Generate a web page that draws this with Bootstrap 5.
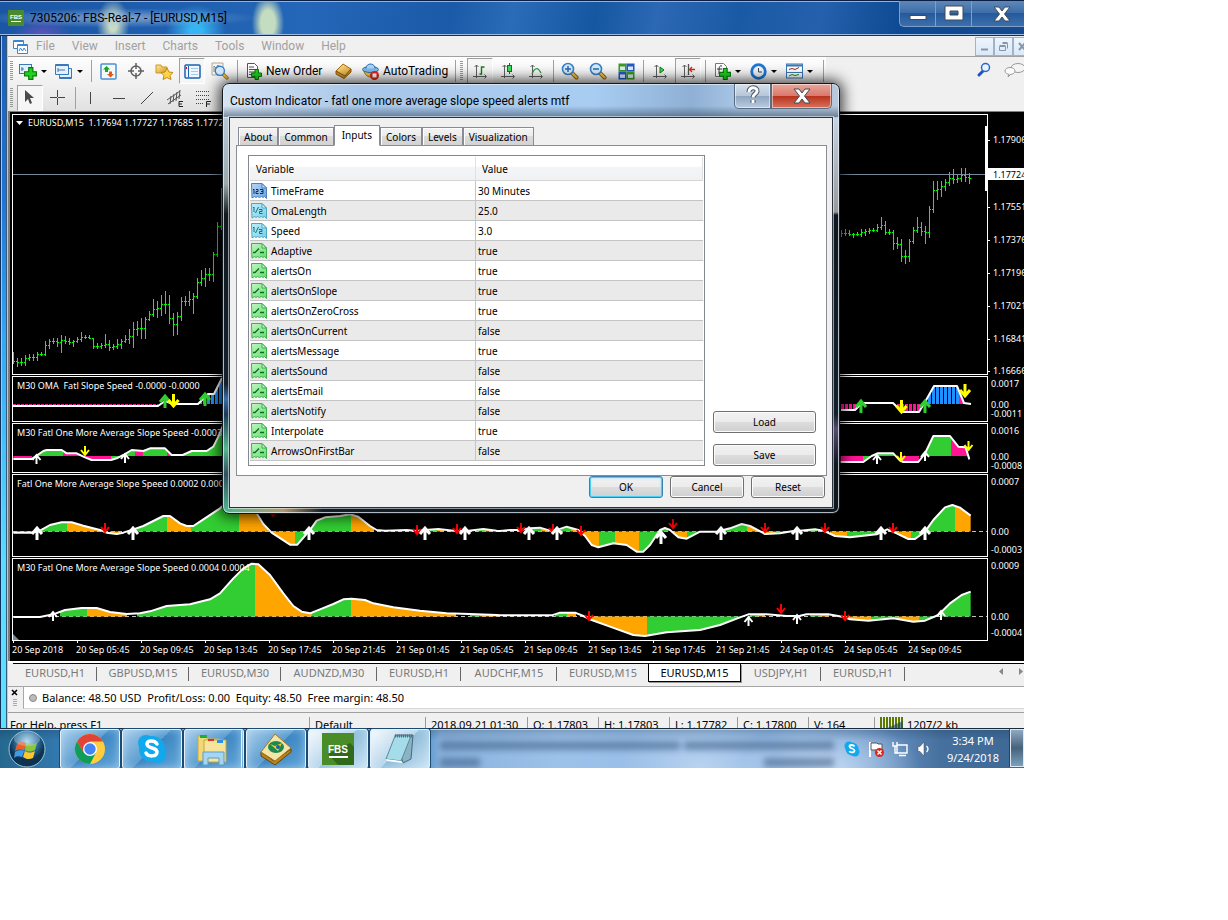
<!DOCTYPE html>
<html lang="en">
<head>
<meta charset="utf-8">
<meta name="viewport" content="width=device-width, initial-scale=1">
<title>7305206: FBS-Real-7 - [EURUSD,M15]</title>
<link href="https://cdn.jsdelivr.net/npm/bootstrap@5.3.0/dist/css/bootstrap.min.css" rel="stylesheet">
<style>
:root{--face:#f0f0f0;--line:#a0a0a0;--ui:"Roboto","Segoe UI",sans-serif;--ui2:"Noto Sans","Segoe UI",sans-serif}
body{background:#fff;font-family:var(--ui);font-size:12px;line-height:16px;color:#000;padding-right:204px}
button{font:inherit;color:inherit;background:none;border:0;padding:0}
a{color:inherit;text-decoration:none}
svg{display:block;flex:none}
.desk{background:linear-gradient(#1a58ae,#1f74d8 200px,#32a8f6 340px,#55dcff 560px,#5ce2ff 700px)}
.titlebar{height:36px;padding-left:8px;gap:6px;border-top:1px solid #0b1f44;box-shadow:inset 0 1px #8fb4e0,inset 0 -1px #9cbce4;border-bottom:1px solid #1a2c50;
 background:radial-gradient(ellipse 200px 14px at 120px 17px,#a9c2e4b0,transparent 70%),radial-gradient(ellipse 30px 18px at 42px 34px,#5a54b8 10%,transparent),radial-gradient(ellipse 18px 30px at 113px 24px,#c9dcc4 20%,transparent 90%),radial-gradient(ellipse 30px 26px at 196px 30px,#35b6f2 20%,transparent),radial-gradient(ellipse 18px 32px at 268px 22px,#c4dcc0 40%,transparent 90%),linear-gradient(100deg,#1a56a4 0,#2466b8 30%,#1b5aa8 44%,#2a6cb8 50%,#1557a0 58%,#2c68b4 64%,#1a5aa4 72%,#2560ac 80%,#0d4a92 88%,#17498c)}
.winbtns{height:26px;align-self:flex-start;border:1px solid #7f9fc8;border-top:0;border-right:0;border-radius:0 0 0 5px;background:linear-gradient(#5f88b8,#3a6ca8 50%,#25599a 50%,#3c70ac)}
.winbtns button{width:36px;height:25px;border-right:1px solid #7f9fc8}
.winbtns button:last-child{width:52px;border:0;padding-left:8px}
.edge{width:8px;border-left:1px solid #10305c;border-right:1px solid #b7cbe0;box-shadow:inset 1px 0 #9cc8f4,inset -1px 0 #3a5878}
.client{background:var(--face);min-width:0}
.menubar{height:21px;border-bottom:1px solid var(--line);color:#a0a0a0;padding-left:5px}
.menubar a{padding:0 9px 0 8px}
.mdi{width:49px}
.mdi button{width:19px;height:19px;border:1px solid #9fb4cb;background:linear-gradient(#eef5fc,#dbe8f6)}
.tools{background:linear-gradient(#fdfdfd,#ededed 60%,#e0e0e0)}
.toolrow{height:27px;border-top:1px solid #fff}
.toolrow2{height:28px;border-bottom:1px solid #808080}
.toolend{border-bottom:1px solid #808080}
.tb{height:26px;width:28px;display:flex;align-items:center;justify-content:center;flex:none}
.tbc{width:36px;justify-content:flex-start;padding-left:2px;gap:4px}
.tbtext{width:auto;justify-content:flex-start;gap:4px;white-space:nowrap}
.neworder{width:89px;padding-left:6px}.autotr{width:95px;padding-left:5px}
.on{border:1px solid #a0a0a0;border-right-color:#fff;border-bottom-color:#fff;background:#f6f6f6;width:26px;margin:0 1px}
.caret{border:3px solid transparent;border-top-color:#000;border-bottom:0}
.sp{width:6px;height:22px;flex:none;background:linear-gradient(var(--line),var(--line)) 3px 0/1px 100% no-repeat}
.grip{width:8px;height:20px;flex:none;background:repeating-linear-gradient(#999 0 1px,transparent 1px 2px) 2px 0/3px 100% no-repeat}
.chartwrap{background:#000;border-left:2px solid #7c7c7c;padding:2px 0 0 2px}
.pane{margin-bottom:1px}
.pane:nth-of-type(5){margin-bottom:0}
.plot{min-width:0;flex:1 1 0}
.ax{width:36px}
svg text{font-family:"Noto Sans",sans-serif;font-size:9px;fill:#fff;white-space:pre}
.ctabs{height:26px;border-top:2px solid #fff;font:11px/16px var(--ui2);color:#7a7a7a;border-bottom:1px solid #a6a6a6;padding-left:5px}
.ctabs>ul{border-top:1px solid #000}
.ctabs li{height:18px;display:flex;align-items:center;justify-content:center;background:linear-gradient(#666,#666) 100% 3px/1px 14px no-repeat}
.t80{width:80px}.t84{width:84px}.t92{width:92px}.t96{width:96px}
.ctabs li.cur{background:#fff;border:1px solid #000;border-top:0;box-shadow:1px 1px #999;color:#000;width:93px;margin-left:-1px}
.term{height:25px;font:11px/20px var(--ui2)}
.termbox{background:#fff;border:1px solid #a8a8a8;border-top:0;border-right:0;border-bottom-color:#d8d8d8;height:22px;white-space:pre;padding-left:5px}
.dot{width:8px;height:8px;border-radius:50%;background:#bbb;border:1px solid #888;margin-right:5px}
.stat{height:16px;border-top:1px solid var(--line);font:11px/16px var(--ui2);overflow:hidden;padding-top:4px;white-space:nowrap}
.stat>span{height:16px;padding-left:5px;border-left:1px solid #999}
.stat>span:first-child{border:0;padding-left:2px}
.s301{width:301px}.s116{width:116px}.s102{width:102px}.s71{width:71px}.s68{width:68px}.s66{width:66px}
.taskbar{height:40px;border-top:1px solid #182a3c;box-shadow:inset 0 1px #b8d4ee;background:linear-gradient(#0f2a4440,transparent 30%),radial-gradient(ellipse 90px 50px at 830px 40px,#c3d9f3,transparent),radial-gradient(ellipse 80px 60px at 700px 40px,#b9d3f0,transparent),linear-gradient(90deg,#25688f 0,#3379b0 60px,#3f86c4 420px,#88b2dc 440px,#9dc2ea 560px,#8fb6e2 800px,#6a94c4 880px,#46719f 940px,#3d6894 1024px)}
.startbtn{width:60px;padding-left:8px}
.tasks{gap:2px}
.tk{width:60px;height:40px;border:1px solid #e3f0fb;border-radius:3px;box-shadow:0 0 0 1px #1c4a70,inset 0 0 8px #d3ecff80;background:linear-gradient(135deg,#a7cdea,#5b9dd0 50%,#3c86c2 50%,#62a6d8);display:flex;align-items:center;justify-content:center;flex:none}
.tk.hot{background:linear-gradient(135deg,#fafdff,#b7d5ea 50%,#8fbcd9 50%,#cbe4f4)}
.stack{border-right:3px double #e3f0fb}
.clock{color:#fff;font:11px/17px var(--ui2);width:74px;text-align:center}
.smudge{left:440px;right:190px;top:12px;height:27px;filter:blur(3px);opacity:.55}
.smudge i{display:block;height:9px;background:#37567e}
.smudge .s1{width:240px}.smudge .s2{width:150px}.smudge .s3{width:40px}.smudge .s4{width:70px}
.showdesk{width:14px;height:38px;border:1px solid #dce9f4;box-shadow:-1px 0 #28435e;background:linear-gradient(#8fa9bf,#46627c 50%,#7aa0bb)}
/* dialog window */
.dlg{left:222px;top:83px;width:618px;border:1px solid #11181f;border-radius:7px;padding:0 7px 6px;box-shadow:0 0 14px 3px #000b,inset 0 0 0 1px #e4eef8c0;
 background:linear-gradient(transparent 22px,#30455a90 33px,transparent 33px),linear-gradient(90deg,#d6e4f4,#a8c6e8 22%,#a9cdf2 60%,#8fb0d4 76%,#a9c6e6 84%,#b8c8dc) 0 0/100% 34px no-repeat,linear-gradient(#b9cadb 30px,#9aa9ac 100px,#121a20 130px,#14202c 300px,#3a6ea8 315px,#1b3a55 330px,#57b690 365px,#2f4f60 390px,#52b890 428px) 0 0/9px 100% no-repeat,linear-gradient(#c6d4e2 34px,#999 128px,#10181f 131px,#122029 330px,#5a4a70 345px,#10181f 380px) 100% 0/9px 100% no-repeat,linear-gradient(90deg,#52b890,#b09a70 60px,#141c24 100px,#0b1218)}
.dlgtitle{height:34px}
.dlgbtns{align-self:flex-start}
.dlgbtns button{height:25px;border:1px solid #5b6b80;border-top:0;box-shadow:inset 0 0 0 1px #ffffff80}
.help{width:37px;border-radius:0 0 0 5px;background:linear-gradient(#d4e0ec,#b5c6d9 50%,#8fa5bf 50%,#b9cde2)}
.cls{width:61px;border-radius:0 0 5px 0;background:linear-gradient(#e8a79c,#d9776a 50%,#b7321d 50%,#d9725a)}
.dclient{background:var(--face);padding:7px 5px 9px 6px;box-shadow:0 0 0 1px #2a333b,0 0 0 2px #f4f8fc90;font:10px/14px var(--ui2)}
.dtabs{padding-left:2px;height:21px;margin-bottom:-1px;position:relative;align-items:flex-end}
.dtabs button{height:19px;padding:0 5px;border:1px solid #898c95;background:linear-gradient(#f4f4f4,#ebebeb 50%,#dcdcdc 50%,#d2d2d2);box-shadow:inset 1px 1px #fff}
.dtabs button.cur{height:21px;background:#fff;border-bottom-color:#fff;padding:0 7px 2px}
.dpanel{background:#fff;border:1px solid #898c95;padding:9px 10px 9px 11px;gap:8px}
.gridbox{border:1px solid #828790;height:311px;padding:1px;flex:1 1 0;min-width:0}
.gridbox table{width:100%;table-layout:fixed;border-collapse:separate;border-spacing:0}
.gridbox th{height:24px;font-weight:400;background:linear-gradient(#fff 40%,#f4f5f7 45%,#eff1f3);border-bottom:1px solid #d5d5d5;border-right:1px solid #e0e1e3;padding:0 6px}
.gridbox td{height:20px;padding:0 2px;border-bottom:1px solid #c4c4c4}
.gridbox td:first-child{border-right:1px solid #c4c4c4;padding-left:1px}
.gridbox th:first-child{width:226px}
.gridbox tr:nth-child(even) td{background:#eaeaea}
.sidebtns{width:103px;gap:11px;flex:none}
.wbtn{height:22px;border:1px solid #707070;border-radius:3px;box-shadow:inset 0 0 0 1px #fcfcfc;background:linear-gradient(#f2f2f2,#ebebeb 50%,#dddddd 50%,#cfcfcf)}
.foot{gap:7px;padding-right:2px}
.foot .wbtn{width:74px}
.wbtn.def{border-color:#3c7fb1;box-shadow:inset 0 0 0 1px #4ad0f8,inset 0 0 3px 1px #a8e4fa}
</style>
</head>
<body>
<svg width="0" height="0" class="position-absolute" aria-hidden="true">
<defs>
<linearGradient id="gold" x2="1" y2="1"><stop stop-color="#ffe9a0"/><stop offset="1" stop-color="#d8961c"/></linearGradient>
<linearGradient id="gn" x2="1" y2="1"><stop stop-color="#c4f7c4"/><stop offset="1" stop-color="#5fdc6c"/></linearGradient>
<linearGradient id="bl" x2="1" y2="1"><stop stop-color="#b8d8f8"/><stop offset="1" stop-color="#6aa0dc"/></linearGradient>
<linearGradient id="cy" x2="1" y2="1"><stop stop-color="#c0f0fa"/><stop offset="1" stop-color="#72cfe6"/></linearGradient>
<radialGradient id="orb" cy=".3"><stop stop-color="#9ad4f0"/><stop offset=".6" stop-color="#2a6c9c"/><stop offset="1" stop-color="#0d3350"/></radialGradient>
<symbol id="plus" viewBox="0 0 11 11"><path d="M4 .5h3.500v3.500H10.500v3.500H7.500V10.500H4V7.500H.5V4H4z" fill="#1fd21f" stroke="#0a7a0a"/></symbol>
<symbol id="axes" viewBox="0 0 16 16"><path d="M4.500 2v13M2.500 4l2-2 2 2M1 13.500h13M12.500 11.500l2 2-2 2" fill="none" stroke="#606060" stroke-width="1"/></symbol>
<symbol id="lens" viewBox="0 0 18 18"><path d="M10.500 10.500l5 5" stroke="#8a6410" stroke-width="4" stroke-linecap="round"/><path d="M10.500 10.500l5 5" stroke="#f0c040" stroke-width="2.400" stroke-linecap="round"/><circle cx="7" cy="7" r="5.500" fill="#d5ebfb" stroke="#3a80c8" stroke-width="1.600"/></symbol>
<symbol id="page" viewBox="0 0 16 16"><path d="M.5.5h10.500l4.500 4.500v10.500l-2-2-1.500 1-1.500-1-2 1-2-1-1.500 1-1.500-1-2.500 1.500z"/><path d="M11 .5v4.500h4.500z" fill="#fff" fill-opacity=".5"/></symbol>
<symbol id="x" viewBox="0 0 20 16"><path d="M2 1h5l3 4 3-4h5l-5.500 7 5.500 7h-5l-3-4-3 4H2l5.500-7z" fill="#fff" stroke="#404a58"/></symbol>
</defs></svg>

<main class="desk position-relative overflow-hidden d-flex flex-column">
<header class="titlebar d-flex align-items-center">
 <svg width="16" height="16"><rect width="16" height="16" fill="#4b8a2c"/><rect x="3" y="11" width="10" height="1" fill="#fff"/><text x="2" y="9" style="font:bold 6px 'Liberation Sans',sans-serif">FBS</text></svg>
 <span class="flex-grow-1">7305206: FBS-Real-7 - [EURUSD,M15]</span>
 <div class="winbtns d-flex overflow-hidden">
  <button aria-label="Minimize" class="d-flex justify-content-center"><svg width="18" height="20"><rect x="1" y="14.500" width="16" height="4" fill="#fff" stroke="#404a58"/></svg></button>
  <button aria-label="Maximize" class="d-flex justify-content-center"><svg width="20" height="22"><path d="M1 5h18v14H1zM6 10v4h8v-4z" fill="#fff" stroke="#404a58" fill-rule="evenodd"/></svg></button>
  <button aria-label="Close" class="d-flex justify-content-center align-items-center"><svg width="20" height="16"><use href="#x"/></svg></button>
 </div>
</header>
<div class="d-flex">
<div class="edge flex-shrink-0"></div>
<div class="client flex-grow-1">
 <nav class="menubar d-flex align-items-center" aria-label="Main menu">
  <svg width="15" height="15" fill="#fff" stroke="#3a86d0"><path d="M.5 1.500h10v8H.5z"/><path d="M.5 2.500h10"/><path d="M4.500 5.500h10v9h-10z"/><path d="M4.500 6.500h10M6 12l1.500-3 2 3 1.500-3 2 3" fill="none"/></svg>
  <a href="#">File</a><a href="#">View</a><a href="#">Insert</a><a href="#">Charts</a><a href="#">Tools</a><a href="#">Window</a><a href="#">Help</a>
  <div class="mdi d-flex ms-auto overflow-hidden">
   <button class="flex-shrink-0" aria-label="Minimize chart"><svg width="17" height="17"><path d="M5 11.500h7" stroke="#8296ae" stroke-width="2"/></svg></button>
   <button class="flex-shrink-0" aria-label="Restore chart"><svg width="17" height="17" fill="none" stroke="#8296ae"><path d="M4.500 8.500h6v4h-6zM4.500 7.500h6M7.500 5.500h5v5M7.500 4.500h5"/></svg></button>
   <button class="flex-shrink-0" aria-label="Close chart"><svg width="17" height="17"><path d="M5 5l6 7M11 5l-6 7" stroke="#8296ae" stroke-width="2"/></svg></button>
  </div>
 </nav>
 <div class="d-flex">
 <div class="tools">
 <div class="toolrow d-flex align-items-center">
  <span class="grip"></span>
  <button class="tb tbc" aria-label="New chart"><svg width="19" height="17"><rect x="1.500" y="1.500" width="12" height="9" fill="#e4f1fc" stroke="#3a78b8"/><path d="M4 4v4M3 6h3" stroke="#3a78b8"/><use href="#plus" x="6" y="4" width="13" height="13"/></svg><i class="caret"></i></button>
  <button class="tb tbc" aria-label="Profiles"><svg width="19" height="17" fill="#e4f1fc" stroke="#3a78b8"><path d="M5.500 5.500h12v10h-12z"/><path d="M1.500 1.500h13v10h-13z"/><path d="M1.500 2.500h13M5 14.500h12M4 5v4M4 7h7"/></svg><i class="caret"></i></button>
  <span class="sp"></span>
  <button class="tb" aria-label="Market watch"><svg width="17" height="17"><rect x="1" y="1" width="15" height="15" rx="1" fill="#f4f8fc" stroke="#4a90d4" stroke-width="1.500"/><path d="M6.500 3l3.500 3.500H8V9H5V6.500H3z" fill="#18a818"/><path d="M10.500 14.500L14 11h-2V8.500H9V11H7z" fill="#e05a20"/></svg></button>
  <button class="tb" aria-label="Data window"><svg width="16" height="16" fill="none" stroke="#606060" stroke-width="1.500"><circle cx="8" cy="8" r="5"/><path d="M8 0v6M8 10v6M0 8h6M10 8h6"/></svg></button>
  <button class="tb" aria-label="Navigator"><svg width="18" height="17"><path d="M1 2h5l1 2h5v6H1z" fill="url(#gold)" stroke="#c89a20"/><path d="M12 5l2 4 4 .5-3 3 1 4-4-2-4 2 1-4-3-3 4-.5z" fill="#ffd34a" stroke="#c08a10"/></svg></button>
  <button class="tb on" aria-label="Terminal"><svg width="17" height="15"><rect x="1" y="1" width="15" height="13" rx="1" fill="#eef6ff" stroke="#1c62b0" stroke-width="1.500"/><path d="M4.500 2v11" stroke="#1c62b0"/><path d="M2.500 3v2" stroke="#d00"/><path d="M7 4.500h7M7 7.500h7M7 10.500h7" stroke="#a8c8e8"/></svg></button>
  <button class="tb" aria-label="Strategy tester"><svg width="18" height="18"><path d="M1 1h11v12H1z" fill="#f4f4f4" stroke="#b0a890"/><path d="M3 10V4l2 2 2-3 2 3" fill="none" stroke="#888"/><use href="#lens" x="3" y="3" width="15" height="15"/></svg></button>
  <span class="sp"></span>
  <button class="tb tbtext neworder"><svg width="16" height="17"><path d="M1.500.5h7l3 3v11h-10z" fill="#fff" stroke="#555"/><path d="M3 4h5M3 6.500h7M3 9h7M3 11.500h4" stroke="#555"/><use href="#plus" x="5" y="6" width="11" height="11"/></svg>New Order</button>
  <button class="tb" aria-label="MetaEditor"><svg width="17" height="16"><path d="M1 8l7-7 8 5-6 8z" fill="url(#gold)" stroke="#a86c10"/><path d="M1 8v3l8 4.500 7-6.500V6l-6 7z" fill="#d0932a" stroke="#8a5a0c"/></svg></button>
  <button class="tb tbtext autotr"><svg width="17" height="17"><path d="M2 8c1 7 11 9 13 0z" fill="#f2c23c" stroke="#a8761a"/><ellipse cx="8.500" cy="6.500" rx="8" ry="3" fill="#7cbcf0" stroke="#2c6cac"/><path d="M4 5.500c0-6 9-6 9 0" fill="#a8d4f8" stroke="#2c6cac"/><circle cx="12.500" cy="12.500" r="4.500" fill="#e02818"/><rect x="10.500" y="10.500" width="4" height="4" fill="#fff"/></svg>AutoTrading</button>
  <span class="sp"></span><span class="grip"></span>
  <button class="tb on" aria-label="Bar chart"><svg width="16" height="16"><use href="#axes"/><path d="M7.500 11h2V4h3" fill="none" stroke="#108010" stroke-width="1.400"/></svg></button>
  <button class="tb" aria-label="Candlesticks"><svg width="16" height="16"><use href="#axes"/><path d="M9.500 0v11" stroke="#0a7a0a"/><rect x="7.500" y="2.500" width="4" height="6" fill="#3fdc5a" stroke="#0a7a0a"/></svg></button>
  <button class="tb" aria-label="Line chart"><svg width="16" height="16"><use href="#axes"/><path d="M4 11c3-7 6-7 9-1" fill="none" stroke="#2a9a3a" stroke-width="1.300"/></svg></button>
  <span class="sp"></span>
  <button class="tb" aria-label="Zoom in"><svg width="18" height="18"><use href="#lens"/><path d="M4 7h6M7 4v6" stroke="#2a68b0" stroke-width="1.500"/></svg></button>
  <button class="tb" aria-label="Zoom out"><svg width="18" height="18"><use href="#lens"/><path d="M4 7h6" stroke="#2a68b0" stroke-width="1.500"/></svg></button>
  <button class="tb" aria-label="Tile windows"><svg width="17" height="17"><path d="M.5.5h8v8h-8z" fill="#3c9a20"/><path d="M8.500.5h8v8h-8z" fill="#2258c8"/><path d="M.5 8.500h8v8h-8z" fill="#2258c8"/><path d="M8.500 8.500h8v8h-8z" fill="#3c9a20"/><path d="M2 3.500h5v3.500H2zM10 3.500h5v3.500h-5zM2 11.500h5v3.500H2zM10 11.500h5v3.500h-5z" fill="#dcecf8"/></svg></button>
  <span class="sp"></span>
  <button class="tb" aria-label="Auto scroll"><svg width="16" height="16"><use href="#axes"/><path d="M8 4l4 3-4 3z" fill="#3fdc5a" stroke="#0a7a0a"/></svg></button>
  <button class="tb on" aria-label="Chart shift"><svg width="16" height="16"><use href="#axes"/><path d="M8.500 1v11" stroke="#505050" stroke-width="1.300"/><path d="M15 6.500h-5M12 4l-2.500 2.500L12 9" fill="none" stroke="#d03010" stroke-width="1.300"/></svg></button>
  <span class="sp"></span>
  <button class="tb tbc ms-1" aria-label="Indicators"><svg width="17" height="18"><path d="M1.500 1.500h8l3 3v10h-11z" fill="#fff" stroke="#777"/><path d="M8 4c-3-1-3 2-3 8M3 7h5" fill="none" stroke="#333"/><use href="#plus" x="5" y="6" width="12" height="12"/></svg><i class="caret"></i></button>
  <button class="tb tbc" aria-label="Periods"><svg width="17" height="17"><circle cx="8.500" cy="8.500" r="6.800" fill="#eef4fa" stroke="#1c78d8" stroke-width="2.800"/><path d="M8.500 5v4h3.500" fill="none" stroke="#444"/></svg><i class="caret"></i></button>
  <button class="tb tbc" aria-label="Templates"><svg width="17" height="16"><rect x=".5" y="1" width="16" height="14" fill="#fff" stroke="#3a78b8"/><path d="M0 2.500h17" stroke="#3a78b8" stroke-width="2"/><path d="M1 9.500h15" stroke="#3a78b8"/><path d="M3 6.500l3-1 3 1 4-2" fill="none" stroke="#a02810"/><path d="M3 13l3-1.500 3 1 4-1" fill="none" stroke="#189018"/></svg><i class="caret"></i></button>
  <span class="sp"></span>
 </div>
 <div class="toolrow2 d-flex align-items-center">
  <span class="grip"></span>
  <button class="tb on" aria-label="Cursor"><svg width="12" height="17"><path d="M1 1v12l3-3 2 5 2-1-2-5h4z" fill="#4a4a4a"/></svg></button>
  <button class="tb" aria-label="Crosshair"><svg width="16" height="16"><path d="M7.500 0v7M7.500 8v7M0 7.500h7M8 7.500h7" stroke="#444"/></svg></button>
  <span class="sp"></span>
  <button class="tb" aria-label="Vertical line"><svg width="16" height="16"><path d="M6.500 2v12" stroke="#444"/></svg></button>
  <button class="tb" aria-label="Horizontal line"><svg width="16" height="16"><path d="M1 8.500h12" stroke="#444"/></svg></button>
  <button class="tb" aria-label="Trend line"><svg width="16" height="16"><path d="M1 14L13 2" stroke="#444"/></svg></button>
  <button class="tb" aria-label="Equidistant channel"><svg width="18" height="18"><path d="M0 11L13 2M1 15L14 6M4 7l-1 8M7 5L6 13M10 3L9 12M13 1l-1 9" stroke="#555"/><path d="M16 12.500h-4v5h4M12 15h3" fill="none" stroke="#222"/></svg></button>
  <button class="tb" aria-label="Fibonacci"><svg width="18" height="18"><path d="M1 2.500h14M1 6.500h14M1 10.500h14M1 14.500h8" stroke="#444" stroke-dasharray="1 1"/><path d="M16 12.500h-4.500V18M12 15h3" fill="none" stroke="#222"/></svg></button>
 </div>
 </div>
 <div class="toolend flex-grow-1 d-flex justify-content-end gap-2 pt-1 overflow-hidden">
  <svg width="16" height="18"><path d="M7 10l-4 4" stroke="#1f50c0" stroke-width="3" stroke-linecap="round"/><circle cx="9.500" cy="6.500" r="4" fill="#e8f4ff" stroke="#2a64d4" stroke-width="1.500"/></svg>
  <svg width="20" height="18" class="ms-1"><ellipse cx="14" cy="7" rx="7" ry="4.500" fill="#f4f4f4" stroke="#999"/><ellipse cx="6" cy="10" rx="5" ry="3.500" fill="#fafafa" stroke="#999"/><path d="M5 13l-1 3 3-3" fill="#fafafa" stroke="#999"/></svg>
 </div>
 </div>
 <div class="chartwrap overflow-hidden" id="charts"></div>
 <nav class="ctabs d-flex" aria-label="Chart windows">
  <ul class="list-unstyled d-flex flex-grow-1 mb-0">
   <li class="t84"><a href="#">EURUSD,H1</a></li><li class="t92"><a href="#">GBPUSD,M15</a></li><li class="t92"><a href="#">EURUSD,M30</a></li><li class="t96"><a href="#">AUDNZD,M30</a></li><li class="t84"><a href="#">EURUSD,H1</a></li><li class="t96"><a href="#">AUDCHF,M15</a></li><li class="t92"><a href="#">EURUSD,M15</a></li><li class="cur"><a href="#">EURUSD,M15</a></li><li class="t80"><a href="#">USDJPY,H1</a></li><li class="t84"><a href="#">EURUSD,H1</a></li>
  </ul>
  <svg width="26" height="20"><path d="M0 .5h26" stroke="#000"/><path d="M5 5v7L1 8.500zM21 5v7l4-3.500z" fill="#888"/></svg>
 </nav>
 <div class="term d-flex">
  <svg width="15" height="24"><path d="M4 3l5 5M9 3l-5 5" stroke="#000" stroke-width="1.600"/><path d="M5 12.500h4M5 14.500h4M5 16.500h4M5 18.500h4" stroke="#aaa"/></svg>
  <div class="termbox flex-grow-1 d-flex align-items-center"><span class="dot"></span>Balance: 48.50 USD  Profit/Loss: 0.00  Equity: 48.50  Free margin: 48.50</div>
 </div>
 <footer class="stat d-flex"><span class="s301">For Help, press F1</span><span class="s116">Default</span><span class="s102">2018.09.21 01:30</span><span class="s71">O: 1.17803</span><span class="s71">H: 1.17803</span><span class="s68">L: 1.17782</span><span class="s71">C: 1.17800</span><span class="s66">V: 164</span><span class="d-flex gap-1"><svg width="23" height="12"><path d="M0 6h23" stroke="#5a7a00" stroke-width="12" stroke-dasharray="2 1"/><path d="M5 12h18V4z" fill="#1c4a5a" fill-opacity=".6"/></svg>1207/2 kb</span></footer>
</div>
</div>

<footer class="taskbar d-flex position-relative">
 <div class="smudge position-absolute overflow-hidden" aria-hidden="true"><div class="d-flex justify-content-between"><i class="s1"></i><i class="s2"></i></div><div class="d-flex justify-content-between mt-2"><i class="s3"></i><i class="s4"></i></div></div>
 <button aria-label="Start" class="startbtn"><svg width="38" height="38"><circle cx="19" cy="19" r="18" fill="url(#orb)" stroke="#9cc4dc"/><path d="M9 14c3-3 6-2 9-1l-2 7c-3-1-6-1-9 1z" fill="#e8602c"/><path d="M19 13c3 2 6 2 10 0l-2 7c-4 2-7 2-10 0z" fill="#8cc63c"/><path d="M7 22c3-2 6-2 9-1l-2 6c-3-1-6-1-8 1z" fill="#3c9ce8"/><path d="M17 21c3 2 6 2 10 0l-2 7c-4 2-7 1-10-1z" fill="#fcc82c"/><ellipse cx="19" cy="9" rx="13" ry="7" fill="#fff" fill-opacity=".25"/></svg></button>
 <div class="tasks d-flex">
 <button class="tk" aria-label="Chrome"><svg width="32" height="32" viewBox="-16 -16 32 32"><circle r="15" fill="#ffcd40"/><path d="M-13-7.500A15 15 0 0 0 0 15L6 3.500-6 3.500z" fill="#109d58"/><path d="M-6 4L-13-7.500A15 15 0 0 1 13-7.500H0z" fill="#e04434"/><circle r="7" fill="#fff"/><circle r="5.700" fill="#4385f4"/></svg></button>
 <button class="tk" aria-label="Skype"><svg width="32" height="32"><circle cx="16" cy="16" r="13" fill="#12a8ec"/><circle cx="10" cy="10" r="8" fill="#12a8ec"/><circle cx="22" cy="22" r="8" fill="#12a8ec"/><path d="M21 11c-2-4-10-4-10 0 0 5 10 3 10 8 0 5-9 5-11 1" fill="none" stroke="#fff" stroke-width="3.500" stroke-linecap="round"/></svg></button>
 <button class="tk stack" aria-label="Explorer"><svg width="36" height="34"><path d="M3 4h8l2 3h12v22H3z" fill="#f0d878" stroke="#c8a83c"/><path d="M5 3h7v3H5z" fill="#18b03c"/><path d="M9 8h22v22H9z" fill="#f6e49a" stroke="#c8a83c"/><path d="M13 7h6v2h-6z" fill="#e83020"/><path d="M22 8h6v3h-6z" fill="#2890e8"/><path d="M8 33V20h21v13h-5v-7H13v7z" fill="#a4d6f4" stroke="#5c9cc8"/></svg></button>
 <button class="tk" aria-label="MetaEditor"><svg width="36" height="34"><path d="M3 20l13 9 17-12v3L17 33 3 24z" fill="#b8831c" stroke="#6a4408"/><path d="M3 20L17 2l16 14-16 13z" fill="#f4e4a8" stroke="#a87818"/><ellipse cx="18" cy="15" rx="8" ry="6" fill="#1c8a4c"/><path d="M12 12l5 2 7-3-4 8z" fill="#f8c830"/><circle cx="20" cy="15" r="2" fill="#1860b0"/></svg></button>
 <button class="tk hot" aria-label="FBS"><svg width="32" height="32"><rect width="32" height="32" fill="#4a8c28"/><path d="M6 21L28 10l4 4v18H16z" fill="#2f6a18"/><text x="6" y="20" style="font:bold 10px 'Liberation Sans',sans-serif">FBS</text><path d="M7 24h19" stroke="#fff" stroke-width="2"/></svg></button>
 <button class="tk hot" aria-label="Notepad"><svg width="34" height="32"><path d="M12 2h18l-2 24-8 4z" fill="#8ab4c4" stroke="#4a6a78"/><path d="M12 3h16L18 28 3 26z" fill="#a4dcea" stroke="#5a8a9a"/><path d="M12 3h17" stroke="#667" stroke-width="3" stroke-dasharray="1 1"/><path d="M3 26l15 2 2 2L4 28z" fill="#fff"/></svg></button>
 </div>
 <div class="d-flex align-items-center ms-auto gap-2">
  <svg width="16" height="16"><circle cx="8" cy="8" r="6.500" fill="#12a8ec"/><circle cx="5" cy="5" r="4.500" fill="#12a8ec"/><circle cx="11" cy="11" r="4.500" fill="#12a8ec"/><path d="M10.500 5.500c-1-2-5-2-5 0 0 2.500 5 1.500 5 4s-4.500 2.500-5 .5" fill="none" stroke="#fff" stroke-width="1.800"/></svg>
  <svg width="16" height="16"><path d="M2 1v15" stroke="#fff" stroke-width="2"/><path d="M3 2h6l1 1h4v7H9L8 9H3z" fill="#fff" stroke="#555"/><circle cx="11.500" cy="11.500" r="4.500" fill="#d8281c"/><path d="M9.500 9.500l4 4m0-4l-4 4" stroke="#fff" stroke-width="1.500"/></svg>
  <svg width="16" height="16" fill="none" stroke="#fff" stroke-width="1.400"><path d="M5 4h10v8H5zM7 14.500h7M1 1v4h4V1M3 5v7h2"/></svg>
  <svg width="16" height="16"><path d="M2 5.500h2l4-4.500v14l-4-4.500H2z" fill="#fff" stroke="#444" stroke-width=".5"/><path d="M10.500 5c2 2 2 4 0 6" fill="none" stroke="#fff" stroke-width="1.300"/></svg>
 </div>
 <div class="clock ms-1 align-self-center">3:34 PM<br>9/24/2018</div>
 <button class="showdesk" aria-label="Show desktop"></button>
</footer>

<section class="dlg position-absolute" role="dialog" aria-labelledby="dt">
 <div class="dlgtitle d-flex align-items-center"><span id="dt" class="flex-grow-1">Custom Indicator - fatl one more average slope speed alerts mtf</span>
  <div class="dlgbtns d-flex"><button class="help d-flex justify-content-center" aria-label="Help"><svg width="16" height="22"><path d="M4 8c0-6 9-5 8-.5-1 3-4 2.500-4 6M8 16v3" fill="none" stroke="#4a5564" stroke-width="5"/><path d="M4 8c0-6 9-5 8-.5-1 3-4 2.500-4 6M8 16v3" fill="none" stroke="#fff" stroke-width="3"/></svg></button><button class="cls d-flex justify-content-center align-items-center" aria-label="Close dialog"><svg width="20" height="16"><use href="#x"/></svg></button></div>
 </div>
 <div class="dclient">
  <div class="dtabs d-flex" role="tablist"><button role="tab">About</button><button role="tab">Common</button><button role="tab" class="cur" aria-selected="true">Inputs</button><button role="tab">Colors</button><button role="tab">Levels</button><button role="tab">Visualization</button></div>
  <div class="dpanel d-flex">
   <div class="gridbox"><table><thead><tr><th scope="col">Variable</th><th scope="col">Value</th></tr></thead><tbody id="vars"></tbody></table></div>
   <div class="sidebtns d-flex flex-column justify-content-end"><button class="wbtn">Load</button><button class="wbtn">Save</button></div>
  </div>
  <div class="foot d-flex justify-content-end"><button class="wbtn def">OK</button><button class="wbtn">Cancel</button><button class="wbtn">Reset</button></div>
 </div>
</section>
</main>

<script src="https://cdn.jsdelivr.net/npm/bootstrap@5.3.0/dist/js/bootstrap.bundle.min.js"></script>
<script>
const vars=[['TimeFrame','30 Minutes','n'],['OmaLength','25.0','d'],['Speed','3.0','d'],['Adaptive','true'],['alertsOn','true'],['alertsOnSlope','true'],['alertsOnZeroCross','true'],['alertsOnCurrent','false'],['alertsMessage','true'],['alertsSound','false'],['alertsEmail','false'],['alertsNotify','false'],['Interpolate','true'],['ArrowsOnFirstBar','false']];
const pg=(f,s,inner)=>`<svg width="16" height="16"><use href="#page" fill="url(#${f})" stroke="${s}"/>${inner}</svg>`;
const ic={
 n:pg('bl','#4a80c0','<path d="M2 7l1-1v5M5 6.500h2v2H5v2h2.500M9 6.500h3v4H9M10 8.500h2" fill="none" stroke="#0c3068"/>'),
 d:pg('cy','#4aa8c4','<path d="M2 5l1-1v5M4.500 10L7.500 4M8 6.500h3v2H8.500v2h3" fill="none" stroke="#1a6c84"/>'),
 b:pg('gn','#3fb04c','<path d="M2 9.500h2l4-4M9 9.500h4" fill="none" stroke="#0c6c20" stroke-width="1.300"/>')};
document.getElementById('vars').innerHTML=vars.map(v=>`<tr><td><div class="d-flex align-items-center gap-1">${ic[v[2]||'b']}<span>${v[0]}</span></div></td><td>${v[1]}</td></tr>`).join('');

/* price bars: [high, low] every 4 units */
const left=[[352,363],[358,366],[358,365],[355,365],[354,360],[354,360],[352,360],[352,355],[341,355],[339,348],[338,343],[338,346],[335,352],[336,343],[338,344],[340,346],[337,342],[332,341],[335,338],[335,338],[338,348],[343,348],[343,348],[334,347],[340,350],[344,349],[339,348],[339,348],[335,342],[329,343],[322,347],[321,335],[318,338],[317,338],[311,320],[299,316],[301,317],[295,315],[291,313],[295,323],[313,335],[312,334],[297,320],[296,305],[291,305],[293,313],[278,298],[270,285],[268,286],[268,280],[252,281],[222,256],[188,229]];
const right=[[230,236],[229,235],[230,235],[233,237],[232,235],[229,236],[229,235],[228,233],[228,231],[224,231],[217,229],[221,234],[229,234],[230,249],[237,248],[239,261],[250,263],[239,261],[227,243],[217,232],[222,235],[226,243],[206,237],[181,212],[181,199],[181,196],[179,190],[172,185],[169,183],[175,182],[168,181],[168,181],[173,183]];
function bars(a,x0){let d='';a.forEach(([h,l],i)=>{const x=x0+i*4+.5,n=a[i+1]||[h,l],c=Math.round((Math.max(h,n[0])+Math.min(l,n[1]))/2)+.5;d+=`M${x} ${h}V${l+1}`;if(i<a.length-1)d+=`M${x} ${c}h1.500M${x+2.5} ${c}h1.500`;else d+=`M${x} ${c}h2`});return `<path d="${d}" stroke="#0f0" fill="none"/>`}
const C={g:'#32cd32',o:'#ffa500',p:'#ff1493',b:'#1e90ff'};
let uid=0;
function hist(zero,pts,segs){const p=pts.map(q=>q.join(',')).join(' '),id='c'+(uid++);
 let s=`<clipPath id="${id}"><polygon points="${pts[0][0]},${zero} ${p} ${pts[pts.length-1][0]},${zero}"/></clipPath><g clip-path="url(#${id})">`;
 for(const [a,b,c,st] of segs){if(st)for(let x=a;x<b;x+=4)s+=`<rect x="${x}" y="376" width="3" height="260" fill="${C[c]}"/>`;else s+=`<rect x="${a}" y="376" width="${b-a}" height="270" fill="${C[c]}"/>`}
 return s+`</g><polyline points="${p}" fill="none" stroke="#fff" stroke-width="2" stroke-linejoin="round"/>`}
const Z=(arr,x,y)=>arr.map(([a,b])=>[x+a/3,y+b/3]);
function arrows(list){return list.map(([x,y,k,c])=>{const big=k=='U'||k=='D',up=k.toUpperCase()=='U',f=up?'':' scale(1 -1)';
 return `<path transform="translate(${x} ${y})${f}" d="${big?'M0 -5V7M-5 1L0 -5L5 1':'M0 -4V5M-4 1L0 -4L4 1'}" fill="none" stroke="${c}" stroke-width="${big?3:2}"/>`}).join('')}
const W='#fff',G='#32cd32',Y='#ff0',R='#f00';
const dash=z=>`<path d="M13 ${z}H987" stroke="#c0c0c0" stroke-dasharray="4 3"/>`;
const z9=a=>Z(a,0,480),z10=a=>Z(a,500,400),z8=a=>Z(a,800,370),z5=a=>Z(a,0,370);
const panes=[
{y:114,h:261,title:'',svg:`<path d="M13 174.500H987" stroke="#778899"/><path d="M16 121h7l-3.500 4z" fill="#fff"/><text x="28" y="126">EURUSD,M15  1.17694 1.17727 1.17685 1.17724</text>`+bars(left,13)+bars(right,841)+`<path d="M986.500 126v65" stroke="#fff" stroke-width="3"/>`,
 ax:[[140,'1.17906'],[207,'1.17551'],[240,'1.17376'],[273,'1.17196'],[306,'1.17021'],[339,'1.16841'],[371,'1.16666']]},
{y:376,h:46,title:'M30 OMA  Fatl Slope Speed -0.0000 -0.0000',svg:`<path d="M13 404.500H158" stroke="#ff1493" stroke-dasharray="3 1"/>`+hist(404,[[13,406],[158,406],[165,401],[173,404],[198,404],[208,394],[214,394],[222,378]],[[199,224,'b',1]])
 +hist(404,[[841,410],[855,410],[862,403],[893,403],[902,412],[919,412],[925,402],[934,386],[957,386],[964,403],[971,404]],[[837,856,'p',1],[893,920,'p',1],[928,958,'b',1],[959,965,'p']])
 +arrows([[165,401,'U',G],[173.500,401,'D',Y],[205,399,'U',G],[861,406,'U',G],[901.500,407,'D',Y],[925,406,'U',G],[965,391,'D',Y]]),ax:[[384,'0.0017'],[405,'0.00'],[414,'-0.0011']]},
{y:423,h:50,title:'M30 Fatl One More Average Slope Speed -0.0003 -0.0004',svg:hist(456,z5([[40,267],[95,267],[108,258],[130,243],[140,240],[185,240],[200,250],[230,250],[255,262],[275,270],[333,270],[350,265],[370,255],[395,240],[430,243],[450,235],[495,235],[515,255],[548,255],[575,243],[620,243],[640,230],[655,200],[669,166]]),[[13,32,'p'],[36,63,'g'],[63,80,'p'],[85,111,'p'],[111,121,'g'],[126,135,'g'],[135,143,'p'],[143,167,'g'],[167,172,'p'],[183,224,'g']])
 +hist(456,z8([[122,276],[190,276],[215,258],[232,250],[280,250],[300,272],[310,276],[355,276],[375,250],[400,198],[450,198],[475,230],[497,232],[508,268]]),[[840,863,'p'],[863,895,'g'],[902,919,'p'],[925,951,'g'],[951,971,'p']])
 +arrows([[36.500,459,'u',W],[85,451,'d',Y],[125,458,'u',W],[877,459,'u',W],[901,457,'d',Y],[925,456,'u',W],[968.500,446,'d',Y]]),ax:[[431,'0.0016'],[457,'0.00'],[466,'-0.0008']]},
{y:474,h:83,title:'Fatl One More Average Slope Speed 0.0002 0.0003',svg:dash(531.5)+hist(531.5,[...z9([[40,158],[95,158],[120,152],[150,135],[185,127],[215,127],[250,137],[300,150],[320,158],[350,162],[370,158],[400,148],[430,138],[490,108],[510,108],[540,130],[560,138],[580,138],[600,125],[660,85],[700,50],[740,60],[770,100],[790,132],[815,158],[870,194],[892,194],[930,150],[950,122],[975,112],[1020,108],[1050,103],[1075,110],[1110,138],[1130,150],[1155,152],[1220,150],[1250,153],[1275,150],[1315,147],[1360,152],[1400,153],[1450,147],[1490,152]]),...z10([[0,393],[30,390],[60,390],[90,385],[120,383],[150,392],[165,392],[200,380],[235,390],[255,408],[275,435],[295,442],[340,430],[380,435],[410,455],[430,455],[450,435],[480,390],[495,384],[510,390],[535,412],[560,416],[600,395],[650,395],[690,385],[725,372],[750,378],[795,402],[840,400],[880,393]]),...z8([[0,482],[45,478],[70,482],[105,498],[150,502],[230,493],[262,478],[290,490],[325,507],[345,507],[375,485],[400,450],[435,412],[457,405],[480,413],[512,437]])],
 [[13,36,'o'],[42,67,'g'],[67,100,'o'],[110,120,'o'],[135,167,'g'],[167,191,'o'],[191,239,'g'],[239,268,'o'],[273,295,'o'],[295,305,'g'],[311,351,'g'],[351,374,'o'],[430,438,'g'],[438,444,'o'],[478,485,'g'],[485,490,'o'],[532,541,'g'],[541,547,'o'],[561,571,'g'],[571,576,'o'],[581,599,'o'],[599,615,'g'],[615,639,'o'],[639,657,'g'],[661,668,'g'],[671,687,'o'],[687,699,'g'],[722,747,'g'],[747,776,'o'],[776,785,'g'],[808,817,'g'],[830,847,'o'],[847,877,'g'],[895,911,'o'],[911,922,'g'],[926,955,'g'],[955,971,'o']])
 +arrows([[105,528,'d',R],[273,512,'d','#900'],[417,530,'d',R],[457,529,'d',R],[521,528,'d',R],[553,529,'d',R],[581,531,'d',R],[673,524,'d',R],[765,528,'d',R],[825,528,'d',R],[893,528,'d',R],...[37,133,309,425,465,529,557,661,721,797,881,925].map(x=>[x,x==661?537:533,'U',W])]),ax:[[482,'0.0007'],[532,'0.00'],[550,'-0.0003']]},
{y:558,h:83,title:'M30 Fatl One More Average Slope Speed 0.0004 0.0004',svg:dash(616.5)+hist(616.5,[...z9([[40,411],[120,411],[160,403],[195,390],[245,384],[290,384],[330,396],[380,402],[420,400],[450,394],[500,378],[570,373],[630,358],[660,340],[700,295],[730,265],[755,251],[775,253],[810,285],[850,340],[880,378],[905,395],[930,400],[960,388],[1000,372],[1030,358],[1055,356],[1095,360],[1120,370],[1180,382],[1260,392],[1340,400],[1430,403],[1490,405]]),...z10([[0,646],[155,646],[180,638],[225,638],[250,648],[275,660],[330,680],[400,705],[435,708],[500,697],[600,690],[660,675],[720,652],[745,643],[800,643],[860,648]]),...z8([[0,737],[20,733],[85,733],[135,742],[150,748],[205,752],[280,745],[340,755],[375,752],[415,735],[450,700],[485,675],[512,665]])],
 [[60,87,'g'],[87,127,'o'],[137,255,'g'],[255,312,'o'],[312,351,'g'],[351,456,'o'],[470,480,'g'],[480,497,'o'],[555,567,'g'],[567,576,'o'],[588,647,'o'],[647,742,'g'],[750,758,'g'],[758,765,'o'],[810,820,'g'],[820,829,'o'],[846,871,'o'],[871,897,'g'],[897,919,'o'],[919,937,'g'],[940,971,'g']])
 +arrows([[53,616,'u',W],[748.500,621,'u',W],[797,619,'u',W],[941,615,'u',W],[589,616,'d',R],[781,609,'d',R],[845,616,'d',R]])+`<path d="M13 634v6h6z" fill="#778899"/>`,ax:[[566,'0.0009'],[617,'0.00'],[633,'-0.0004']]}];
let html='';
for(const p of panes){
 html+=`<div class="pane d-flex"><svg class="plot" height="${p.h}" viewBox="12 ${p.y} 976 ${p.h}" preserveAspectRatio="xMaxYMin slice"><rect x="12.5" y="${p.y+.5}" width="975" height="${p.h-1}" fill="none" stroke="#fff"/>${p.svg}<text x="17" y="${p.y+13}">${p.title}</text></svg>`;
 html+=`<svg class="ax" height="${p.h}" viewBox="988 ${p.y} 36 ${p.h}">`+(p.y==114?`<rect x="988" y="168" width="36" height="12" fill="#fff"/><text x="993" y="178" style="fill:#000">1.17724</text>`:'')+p.ax.map(([y,t])=>(p.y==114?`<path d="M988 ${y}.5h2" stroke="#fff"/>`:'')+`<text x="${p.y==114?993:991}" y="${y+3}">${t}</text>`).join('')+`</svg></div>`}
const dates=['20 Sep 2018','20 Sep 05:45','20 Sep 09:45','20 Sep 13:45','20 Sep 17:45','20 Sep 21:45','21 Sep 01:45','21 Sep 05:45','21 Sep 09:45','21 Sep 13:45','21 Sep 17:45','21 Sep 21:45','24 Sep 01:45','24 Sep 05:45','24 Sep 09:45'];
html+=`<svg class="w-100" height="20" viewBox="12 641 1012 20" preserveAspectRatio="xMaxYMin slice">`+dates.map((d,i)=>`<path d="M${13.5+i*64} 640v3" stroke="#fff"/><text x="${12+i*64}" y="653">${d}</text>`).join('')+'</svg>';
document.getElementById('charts').innerHTML=html;
</script>
</body>
</html>
